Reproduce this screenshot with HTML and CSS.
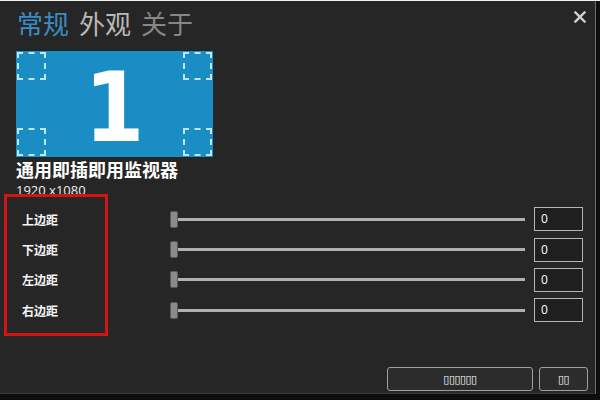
FILE: index.html
```html
<!DOCTYPE html>
<html lang="zh">
<head>
<meta charset="utf-8">
<title>显示器设置</title>
<link rel="stylesheet" href="styles.css">
</head>
<body>
<div class="frame">
  <div class="window">
    <div class="header">
      <nav class="tabs">
        <span class="tab active">常规</span>
        <span class="tab">外观</span>
        <span class="tab dim">关于</span>
      </nav>
      <svg class="close" width="12" height="12" viewBox="0 0 12 12">
        <path d="M1.5 1.5 L10.5 10.5 M10.5 1.5 L1.5 10.5" stroke="#d0d0d0" stroke-width="2.4" stroke-linecap="square"/>
      </svg>
    </div>
    <div class="preview">
      <span class="corner tl"></span>
      <span class="corner tr"></span>
      <span class="corner bl"></span>
      <span class="corner br"></span>
      <span class="num">1</span>
    </div>
    <div class="mon-name">通用即插即用监视器</div>
    <div class="mon-res">1920 x1080</div>
    <div class="rows">
      <div class="row">
        <span class="label">上边距</span>
        <div class="slider"><span class="thumb"></span><span class="track"></span></div>
        <div class="field">0</div>
      </div>
      <div class="row">
        <span class="label">下边距</span>
        <div class="slider"><span class="thumb"></span><span class="track"></span></div>
        <div class="field">0</div>
      </div>
      <div class="row">
        <span class="label">左边距</span>
        <div class="slider"><span class="thumb"></span><span class="track"></span></div>
        <div class="field">0</div>
      </div>
      <div class="row">
        <span class="label">右边距</span>
        <div class="slider"><span class="thumb"></span><span class="track"></span></div>
        <div class="field">0</div>
      </div>
    </div>
    <div class="buttons">
      <button class="btn wide">▯▯▯▯▯▯</button>
      <button class="btn narrow">▯▯</button>
    </div>
    <div class="highlight"></div>
  </div>
</div>
</body>
</html>
```
FILE: styles.css
```css
* { box-sizing: border-box; }
html, body { margin: 0; padding: 0; }
body {
  width: 600px;
  height: 400px;
  overflow: hidden;
  background: #ffffff;
  font-family: "Noto Sans CJK SC", "Noto Sans", sans-serif;
}
.frame {
  width: 600px;
  height: 400px;
  background: #0e0e0e;
  border-top: 1px solid #f2f2f2;
  display: flex;
  flex-direction: column;
}
.window {
  position: relative;
  width: 596px;
  height: 393px;
  background: #262626;
  border-right: 1px solid #6a6a6a;
  border-bottom: 1px solid #3a3a3a;
  padding: 0 7px 2px 16px;
  display: flex;
  flex-direction: column;
  color: #fff;
}
.header {
  height: 50px;
  display: flex;
  justify-content: space-between;
  align-items: flex-start;
}
.tabs {
  display: flex;
  gap: 10px;
  padding-left: 1px;
  font-size: 26px;
  line-height: 43px;
}
.tab { color: #b8b8b8; }
.tab.active { color: #3a8dc2; }
.tab.dim { color: #878787; }
.close {
  margin-top: 10px;
  margin-right: 2px;
}
.preview {
  position: relative;
  width: 197px;
  height: 106px;
  background: #1b8dc5;
  display: flex;
  align-items: center;
  justify-content: center;
}
.corner {
  position: absolute;
  width: 29px;
  height: 28px;
  border: 2px dashed #bde6f8;
}
.corner.tl { left: 1px; top: 1px; }
.corner.tr { right: 1px; top: 1px; }
.corner.bl { left: 1px; bottom: 1px; }
.corner.br { right: 1px; bottom: 1px; }
.num {
  font-family: "DejaVu Sans", sans-serif;
  font-weight: 700;
  font-size: 96px;
  line-height: 1;
  color: #ffffff;
  margin-top: 8px;
  transform: scaleX(0.9);
}
.mon-name {
  margin-top: 2px;
  font-size: 18px;
  line-height: 21px;
  font-weight: 700;
  color: #ffffff;
}
.mon-res {
  margin-top: 4px;
  font-family: "Open Sans", "Noto Sans", sans-serif;
  font-size: 13px;
  line-height: 13px;
  color: #f0f0f0;
}
.rows {
  margin-top: 7px;
  display: flex;
  flex-direction: column;
}
.row {
  height: 30.4px;
  display: flex;
  align-items: center;
  padding-left: 6px;
}
.label {
  width: 148px;
  font-size: 12px;
  font-weight: 700;
  color: #f4f4f4;
}
.slider {
  width: 355px;
  display: flex;
  align-items: center;
}
.thumb {
  width: 8px;
  height: 17px;
  background: #8a8a8a;
  border: 1px solid #5a5a5a;
  border-radius: 2px;
}
.track {
  flex: 1;
  height: 3px;
  background: #b0b0b0;
}
.field {
  margin-left: 9px;
  width: 49px;
  height: 24px;
  border: 1px solid #b4b4b4;
  background: #1f1f1f;
  padding-left: 6px;
  font-family: "Open Sans", "Noto Sans", sans-serif;
  font-size: 12px;
  line-height: 22px;
  color: #ffffff;
}
.buttons {
  margin-top: auto;
  display: flex;
  justify-content: flex-end;
  gap: 6px;
}
.btn {
  height: 24px;
  border: 1px solid #a0a0a0;
  border-radius: 3px;
  background: #2c2c2c;
  color: #ffffff;
  font-family: "DejaVu Sans", sans-serif;
  font-size: 11px;
  font-weight: 700;
  letter-spacing: -0.5px;
  padding: 0;
}
.btn.wide { width: 146px; }
.btn.narrow { width: 49px; }
.highlight {
  position: absolute;
  left: 4px;
  top: 193px;
  width: 104px;
  height: 142px;
  border: 3px solid #d11414;
  pointer-events: none;
}
```
